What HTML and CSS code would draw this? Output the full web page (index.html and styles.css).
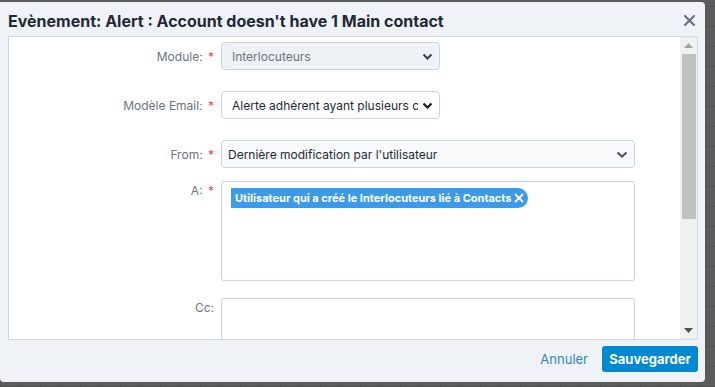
FILE: index.html
```html
<!DOCTYPE html>
<html lang="fr">
<head>
    <meta charset="UTF-8">
    <title>Evènement</title>
    <link rel="stylesheet" href="styles.css">
</head>
<body>
    <div class="modal">
        <div class="modal-header">
            <h1>Evènement: Alert : Account doesn't have 1 Main contact</h1>
            <span class="close-btn">
                <svg width="11" height="11" viewBox="0 0 11 11"><path d="M1 1L10 10M10 1L1 10" stroke="#6b7280" stroke-width="2.2" stroke-linecap="round"/></svg>
            </span>
        </div>
        <div class="modal-body">
            <div class="form">
                <div class="row row-module">
                    <label class="label">Module: <span class="req">*</span></label>
                    <div class="select small disabled">
                        <span class="value">Interlocuteurs</span>
                        <svg class="chev" width="11" height="7" viewBox="0 0 11 7"><path d="M1.5 1.5L5.5 5.5L9.5 1.5" fill="none" stroke="#374151" stroke-width="2"/></svg>
                    </div>
                </div>
                <div class="row row-email">
                    <label class="label">Modèle Email: <span class="req">*</span></label>
                    <div class="select small">
                        <span class="value">Alerte adhérent ayant plusieurs contacts principaux</span>
                        <svg class="chev" width="11" height="7" viewBox="0 0 11 7"><path d="M1.5 1.5L5.5 5.5L9.5 1.5" fill="none" stroke="#111827" stroke-width="2.2"/></svg>
                    </div>
                </div>
                <div class="row row-from">
                    <label class="label">From: <span class="req">*</span></label>
                    <div class="select wide light">
                        <span class="value">Dernière modification par l'utilisateur</span>
                        <svg class="chev" width="12" height="7" viewBox="0 0 12 7"><path d="M1.5 1.5L6 5.5L10.5 1.5" fill="none" stroke="#4b5563" stroke-width="2.2"/></svg>
                    </div>
                </div>
                <div class="row row-top row-to">
                    <label class="label">A: <span class="req">*</span></label>
                    <div class="textarea tall">
                        <span class="chip">Utilisateur qui a créé le Interlocuteurs lié à Contacts
                            <svg width="10" height="10" viewBox="0 0 10 10"><path d="M1 1L9 9M9 1L1 9" stroke="#fff" stroke-width="1.8"/></svg>
                        </span>
                    </div>
                </div>
                <div class="row row-top row-cc">
                    <label class="label">Cc:</label>
                    <div class="textarea tall"></div>
                </div>
            </div>
            <div class="scrollbar">
                <div class="scroll-btn">
                    <svg width="9" height="5" viewBox="0 0 9 5"><path d="M0 5L4.5 0L9 5Z" fill="#a3a3a3"/></svg>
                </div>
                <div class="scroll-track">
                    <div class="scroll-thumb"></div>
                </div>
                <div class="scroll-btn">
                    <svg width="9" height="5" viewBox="0 0 9 5"><path d="M0 0L4.5 5L9 0Z" fill="#505050"/></svg>
                </div>
            </div>
        </div>
        <div class="modal-footer">
            <a href="#" class="cancel-link">Annuler</a>
            <button class="save-btn">Sauvegarder</button>
        </div>
    </div>
</body>
</html>
```

FILE: styles.css
```css
body {
    margin: 0;
    height: 387px;
    overflow: hidden;
    font-family: Inter, "Noto Sans", sans-serif;
    background-color: #5c5c5c;
    background-image:
        repeating-linear-gradient(90deg, rgba(0,0,0,0.12) 0 1px, transparent 1px 20px),
        repeating-linear-gradient(0deg, rgba(0,0,0,0.12) 0 1px, transparent 1px 20px);
}

.modal {
    margin-top: 2px;
    width: 705px;
    height: 380px;
    background-color: #eff3f8;
    border-radius: 0 4px 4px 4px;
    display: flex;
    flex-direction: column;
}

.modal-header {
    height: 34px;
    display: flex;
    align-items: center;
    justify-content: space-between;
    padding: 0 10px 0 8px;
}

.modal-header h1 {
    margin: 4px 0 0;
    font-size: 16px;
    font-weight: 700;
    color: #1f2937;
}

.close-btn {
    display: flex;
    margin-top: 2px;
}

.modal-body {
    margin: 0 7px 0 8px;
    height: 302px;
    background-color: #fff;
    border: 1px solid #cdd6e2;
    display: flex;
}

.form {
    flex: 1;
    overflow: hidden;
    padding-top: 5px;
}

.scrollbar {
    width: 17px;
    background-color: #f1f1f1;
    display: flex;
    flex-direction: column;
}

.scroll-btn {
    height: 17px;
    display: flex;
    align-items: center;
    justify-content: center;
}

.scroll-track {
    flex: 1;
    padding: 0 1px 0 2px;
}

.scroll-thumb {
    height: 165px;
    background-color: #c1c1c1;
}

.row {
    display: flex;
    align-items: center;
}

.row-top {
    align-items: flex-start;
}

.label {
    width: 205px;
    flex-shrink: 0;
    text-align: right;
    font-size: 12px;
    color: #6b7280;
    margin-right: 7px;
}

.row-top .label {
    padding-top: 2px;
}

.req {
    color: #ef4444;
    margin-left: 2px;
}

.row-email {
    margin-top: 21px;
}

.row-from {
    margin-top: 21px;
}

.row-to {
    margin-top: 13px;
}

.row-cc {
    margin-top: 17px;
}

.select {
    height: 28px;
    box-sizing: border-box;
    border: 1px solid #cbd5e1;
    border-radius: 4px;
    background-color: #fff;
    display: flex;
    align-items: center;
    padding: 0 6px 0 10px;
    font-size: 12px;
    color: #1f2937;
}

.select .value {
    flex: 1;
    white-space: nowrap;
    overflow: hidden;
}

.select .chev {
    margin-left: 4px;
    flex-shrink: 0;
}

.small {
    width: 219px;
}

.disabled {
    background-color: #eef1f5;
    color: #6b7280;
}

.wide {
    width: 414px;
    padding-left: 6px;
}

.light {
    background-color: #f8fafc;
}

.textarea {
    width: 414px;
    box-sizing: border-box;
    border: 1px solid #cbd5e1;
    border-radius: 3px;
    padding: 4px 9px;
}

.tall {
    height: 100px;
}

.chip {
    display: inline-flex;
    align-items: center;
    height: 20px;
    padding: 0 4px;
    background-color: #3d9ae8;
    color: #fff;
    font-size: 11px;
    font-weight: 700;
    border-radius: 0 10px 10px 0;
}

.chip svg {
    margin-left: 3px;
}

.modal-footer {
    flex: 1;
    display: flex;
    align-items: center;
    justify-content: flex-end;
    padding: 0 7px 4px 0;
}

.cancel-link {
    color: #2f86c8;
    font-size: 13px;
    text-decoration: none;
    margin-right: 14px;
}

.save-btn {
    height: 26px;
    width: 96px;
    border: none;
    border-radius: 3px;
    background-color: #0288d1;
    color: #fff;
    font-family: Inter, "Noto Sans", sans-serif;
    font-size: 13px;
    font-weight: 700;
    cursor: pointer;
}
```
